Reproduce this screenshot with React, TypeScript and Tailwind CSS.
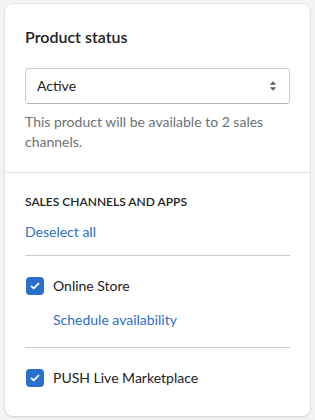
const FONT = { fontFamily: 'Lato, "Noto Sans", Arial, sans-serif' };

function Checkbox() {
  return (
    <span className="flex h-[18px] w-[18px] shrink-0 items-center justify-center rounded-[4px] bg-[#2c6ecb]">
      <svg viewBox="0 0 20 20" className="h-[14px] w-[14px]" fill="none">
        <path d="M5 10.5l3.2 3L15 6.5" stroke="#fff" strokeWidth="2.6" strokeLinecap="round" strokeLinejoin="round" />
      </svg>
    </span>
  );
}

export default function App() {
  return (
    <div className="min-h-[420px] bg-[#f4f4f4] px-[5px] pt-[4px]" style={FONT}>
      <div className="rounded-[8px] bg-white text-[#202223] shadow-[0_0_0_1px_rgba(63,63,68,0.05),0_1px_3px_rgba(63,63,68,0.15)]">
        {/* Status */}
        <div className="px-[20px] pt-[21px] pb-[20px]">
          <h2 className="text-[16px] leading-[24px] font-semibold">Product status</h2>
          <div className="mt-[19px] flex h-[36px] items-center justify-between rounded-[4px] border border-[#c9cccf] border-b-[#aeb4b9] pl-[11px] pr-[12px]">
            <span className="text-[14px] leading-[20px]">Active</span>
            <svg viewBox="0 0 10 14" className="h-[12px] w-[8px]" fill="#5c5f62">
              <path d="M5 1L9 5.5H1z" />
              <path d="M5 13L1 8.5h8z" />
            </svg>
          </div>
          <p className="mt-[8px] text-[14px] leading-[20px] text-[#6d7175]">
            This product will be available to 2 sales channels.
          </p>
        </div>

        {/* Channels */}
        <div className="border-t border-[#e1e3e5] px-[20px] pt-[21px] pb-[28px]">
          <h3 className="text-[12px] leading-[16px] font-semibold uppercase">Sales channels and apps</h3>
          <div className="mt-[12px] text-[14px] leading-[20px] text-[#2c6ecb]">Deselect all</div>
          <div className="mt-[13px] border-t border-[#c9cccf]" />
          <div className="flex items-center gap-[9px] pt-[20px] pl-[1px] text-[14px] leading-[20px]">
            <Checkbox />
            <span>Online Store</span>
          </div>
          <div className="mt-[14px] pl-[28px] text-[14px] leading-[20px] text-[#2c6ecb]">Schedule availability</div>
          <div className="mt-[17px] border-t border-[#c9cccf]" />
          <div className="flex items-center gap-[9px] pt-[20px] pl-[1px] text-[14px] leading-[20px]">
            <Checkbox />
            <span>PUSH Live Marketplace</span>
          </div>
        </div>
      </div>
    </div>
  );
}
